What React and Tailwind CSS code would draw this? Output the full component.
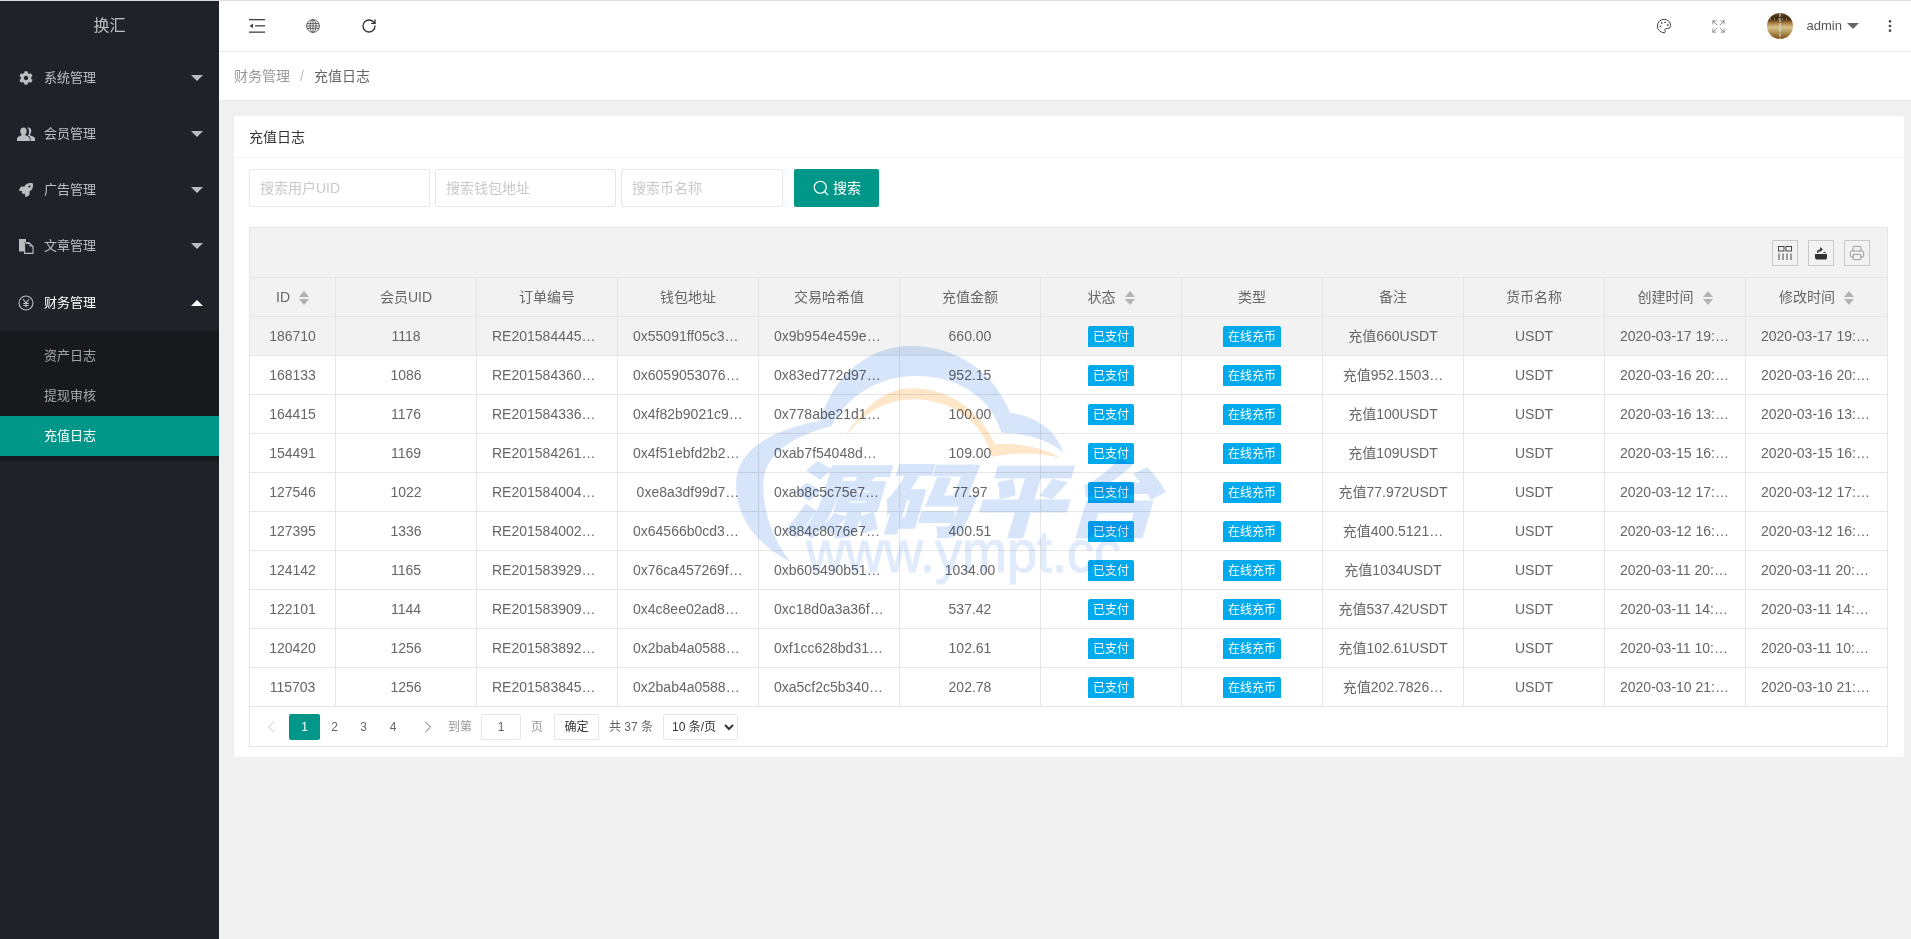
import React from 'react';
import { Palette, RotateCw, Expand, EllipsisVertical, Printer, Search, ChevronLeft, ChevronRight } from 'lucide-react';
import { FaCog, FaRocket } from 'react-icons/fa';

const RMB = () => (
  <svg width="16" height="16" viewBox="0 0 16 16" fill="none" stroke="currentColor" strokeWidth="1.1">
    <circle cx="8" cy="8" r="7" />
    <path d="M5 4 L8 8 L11 4 M8 8 V12.5 M5.2 8.5 H10.8 M5.2 10.5 H10.8" />
  </svg>
);

const Users = () => (
  <svg width="18" height="16" viewBox="0 0 18 16" fill="currentColor">
    <path d="M11.5 1.5 C13.3 1.5 14.3 3 14.3 5 C14.3 6.6 13.6 7.8 12.8 8.5 C13 9.3 14 9.7 15.5 10.3 C17 10.9 18 11.6 18 13 V15 H13.5 V12.8 C13.5 11.2 12.2 10.2 10.8 9.6 C11.8 8.5 12.2 6.8 12 5 C11.9 3.6 11.2 2.4 10.2 1.8 C10.6 1.6 11 1.5 11.5 1.5 Z" />
    <path d="M6.5 1.5 C8.6 1.5 9.7 3.1 9.7 5 C9.7 6.6 9 7.9 8.1 8.6 C8.3 9.4 9.4 9.8 10.6 10.3 C11.7 10.8 12.8 11.6 12.8 13 V15 H0 V13 C0 11.6 1.2 10.8 2.4 10.3 C3.6 9.8 4.7 9.4 4.9 8.6 C4 7.9 3.3 6.6 3.3 5 C3.3 3.1 4.4 1.5 6.5 1.5 Z" />
  </svg>
);

const Pages = () => (
  <svg width="16" height="16" viewBox="0 0 16 16">
    <path d="M1 1 H8 V4 H6 V13.5 H1 Z" fill="currentColor" />
    <path d="M6.6 5 H11.5 L15 8.5 V15.4 H6.6 Z" fill="none" stroke="currentColor" strokeWidth="1.1" />
    <path d="M7 4.5 H11.5 V8.5 H15" fill="currentColor" />
  </svg>
);

const menus = [
  { name: '系统管理', icon: <FaCog size={14} /> },
  { name: '会员管理', icon: <Users /> },
  { name: '广告管理', icon: <FaRocket size={14} /> },
  { name: '文章管理', icon: <Pages /> },
];

const rows = [
  ['186710', '1118', 'RE2015844456012', '0x55091ff05c3a7be19', '0x9b954e459e1c7da02', '660.00', '充值660USDT', '2020-03-17 19:32:10'],
  ['168133', '1086', 'RE2015843602154', '0x60590530761ab4e97', '0x83ed772d97fa1c340', '952.15', '充值952.1503…', '2020-03-16 20:14:52'],
  ['164415', '1176', 'RE2015843369481', '0x4f82b9021c9ea7703', '0x778abe21d1c0f4e92', '100.00', '充值100USDT', '2020-03-16 13:08:41'],
  ['154491', '1169', 'RE2015842617730', '0x4f51ebfd2b2a60c18', '0xab7f54048d93ce7a1', '109.00', '充值109USDT', '2020-03-15 16:47:03'],
  ['127546', '1022', 'RE2015840042216', '0xe8a3df99d7…', '0xab8c5c75e7d0ac316', '77.97', '充值77.972USDT', '2020-03-12 17:20:36'],
  ['127395', '1336', 'RE2015840029957', '0x64566b0cd34ae8f71', '0x884c8076e7b21f5d0', '400.51', '充值400.5121…', '2020-03-12 16:58:19'],
  ['124142', '1165', 'RE2015839294408', '0x76ca457269fd03be2', '0xb605490b51c8ea724', '1034.00', '充值1034USDT', '2020-03-11 20:25:47'],
  ['122101', '1144', 'RE2015839096673', '0x4c8ee02ad8317fb06', '0xc18d0a3a36f9be215', '537.42', '充值537.42USDT', '2020-03-11 14:39:28'],
  ['120420', '1256', 'RE2015838925180', '0x2bab4a05885fd1c37', '0xf1cc628bd31a07e64', '102.61', '充值102.61USDT', '2020-03-11 10:11:05'],
  ['115703', '1256', 'RE2015838453329', '0x2bab4a05885fd1c37', '0xa5cf2c5b3409dd1e8', '202.78', '充值202.7826…', '2020-03-10 21:02:54'],
];

const SortIcon = () => (
  <span className="ml-[9px] inline-flex flex-col gap-[2px] align-middle">
    <span className="h-0 w-0 border-x-[5px] border-b-[6px] border-x-transparent border-b-[#b2b2b2]" />
    <span className="h-0 w-0 border-x-[5px] border-t-[6px] border-x-transparent border-t-[#b2b2b2]" />
  </span>
);

const Th = ({ children, sort, last, width }) => (
  <th className={`h-[39px] border-b border-[#e6e6e6] px-0 text-center text-sm font-normal text-[#666] ${last ? '' : 'border-r'} ${width || ''}`}>
    {children}
    {sort && <SortIcon />}
  </th>
);

const Td = ({ children, last }) => (
  <td className={`h-[39px] border-b border-[#e6e6e6] p-0 text-center text-sm text-[#666] ${last ? '' : 'border-r'}`}>
    <div className="truncate px-[15px]">{children}</div>
  </td>
);

const Tag = ({ children }) => (
  <span className="relative top-[1px] inline-block h-[22px] rounded-[2px] bg-[#01AAED] px-[5px] text-xs leading-[22px] text-white">{children}</span>
);

const ToolBtn = ({ children }) => (
  <button className="flex h-[26px] w-[26px] items-center justify-center border border-[#c9c9c9] text-[#333]">{children}</button>
);

// cloud logo laid over the table
const Watermark = () => (
  <svg className="pointer-events-none absolute left-[720px] top-[330px] z-10 h-[280px] w-[500px] mix-blend-multiply" viewBox="0 0 1500 840">
    <g fill="#d6e5fa">
      <path d="M210 692 C110 640 48 560 48 460 C48 370 130 300 300 270 C340 130 450 45 570 45 C710 45 820 120 870 245 C950 255 1010 300 1030 365 C990 330 920 305 845 305 C810 195 710 135 590 135 C480 135 385 190 335 285 C200 320 130 380 130 460 C130 560 165 630 210 692 Z" />
      <text x="190" y="598" stroke="#d6e5fa" strokeWidth="4" fontFamily="'Noto Sans CJK SC', sans-serif" fontWeight="900" fontStyle="italic" fontSize="240" textLength="1125" lengthAdjust="spacingAndGlyphs">源码平台</text>
    </g>
    <path fill="#fde7c8" d="M375 318 C430 225 500 172 575 172 C690 172 780 240 825 340 C900 335 970 350 1020 380 C960 365 890 362 815 378 C790 270 690 205 580 205 C490 205 430 250 375 318 Z" />
    <text x="258" y="722" fill="#e0ebfb" stroke="#e0ebfb" strokeWidth="3" fontFamily="'Liberation Sans', sans-serif" fontSize="175" textLength="945" lengthAdjust="spacingAndGlyphs">www.ympt.cc</text>
  </svg>
);

const App = () => {
  return (
    <div className="relative flex h-screen flex-col overflow-hidden border-t border-[#ddd] bg-[#f0f0f0] font-['Liberation_Sans','Noto_Sans_CJK_SC',sans-serif]">
      <Watermark />
      <div className="flex min-h-0 flex-1">
        {/* sidebar */}
        <aside className="w-[219px] shrink-0 bg-[#20222A]">
          <div className="flex h-[49px] items-center justify-center text-base text-white/70">换汇</div>
          {menus.map(m => (
            <div key={m.name} className="relative flex h-[56px] items-center pl-[44px] pr-[16px] text-[13px] text-white/70">
              <span className="absolute left-[17px] flex w-[18px] justify-center">{m.icon}</span>
              <span className="flex-1">{m.name}</span>
              <span className="h-0 w-0 border-x-[6px] border-t-[6px] border-x-transparent border-t-white/70" />
            </div>
          ))}
          <div className="relative flex h-[57px] items-center pl-[44px] pr-[16px] text-[13px] text-white">
            <span className="absolute left-[17px] flex w-[18px] justify-center text-white/70"><RMB /></span>
            <span className="flex-1">财务管理</span>
            <span className="h-0 w-0 border-x-[6px] border-b-[6px] border-x-transparent border-b-white" />
          </div>
          <div className="bg-[#18191d] py-[5px] text-[13px]">
            <div className="flex h-[40px] items-center pl-[44px] text-white/60">资产日志</div>
            <div className="flex h-[40px] items-center pl-[44px] text-white/60">提现审核</div>
            <div className="flex h-[40px] items-center bg-[#009688] pl-[44px] text-white">充值日志</div>
          </div>
        </aside>

        <main className="flex min-w-0 flex-1 flex-col">
          {/* top bar */}
          <header className="flex h-[51px] shrink-0 items-center border-b border-[#e8e8e8] bg-white pl-[30px] pr-[13px] text-[#444]">
            <svg width="16" height="14" viewBox="0 0 16 14" fill="currentColor">
              <rect x="0" y="0" width="16" height="1.3" />
              <rect x="0" y="12.5" width="16" height="1.3" />
              <rect x="6" y="6.2" width="10" height="1.3" />
              <path d="M0.5 6.9 L4 4.6 V9.2 Z" />
            </svg>
            <svg className="ml-[41px]" width="14" height="14" viewBox="0 0 14 14" fill="none" stroke="#555" strokeWidth="0.9">
              <circle cx="7" cy="7" r="6.4" />
              <ellipse cx="7" cy="7" rx="3" ry="6.4" />
              <path d="M7 .6 V13.4 M1 4.6 H13 M.6 7 H13.4 M1 9.4 H13" />
            </svg>
            <RotateCw className="ml-[41px]" size={16} strokeWidth={2} color="#333" />
            <div className="ml-auto flex items-center">
              <Palette size={16} strokeWidth={1.5} color="#444" />
              <Expand className="ml-[39px]" size={15} strokeWidth={1.3} color="#777" />
              <svg className="ml-[41px]" width="26" height="26" viewBox="0 0 26 26">
                <defs>
                  <linearGradient id="av" x1="0" y1="0" x2="0" y2="1">
                    <stop offset="0" stopColor="#6a4a24" />
                    <stop offset="0.22" stopColor="#3c2208" />
                    <stop offset="0.38" stopColor="#a67a3c" />
                    <stop offset="0.55" stopColor="#d8c48e" />
                    <stop offset="0.75" stopColor="#b29452" />
                    <stop offset="1" stopColor="#7a4c12" />
                  </linearGradient>
                </defs>
                <circle cx="13" cy="13" r="13" fill="url(#av)" />
                <path d="M13 0 V26" stroke="#cfe2ea" strokeWidth="1" strokeDasharray="4 1" />
                <path d="M3 6 H23" stroke="#fff" strokeWidth="0.8" strokeDasharray="1 3" />
              </svg>
              <span className="ml-[14px] text-[13px] text-[#555]">admin</span>
              <span className="ml-[5px] h-0 w-0 border-x-[6px] border-t-[6px] border-x-transparent border-t-[#666]" />
              <EllipsisVertical className="ml-[23px]" size={16} strokeWidth={2} color="#444" />
            </div>
          </header>

          {/* breadcrumb */}
          <div className="flex h-[49px] shrink-0 items-center border-b border-[#eaeaea] bg-white pl-[15px] text-sm">
            <span className="text-[#999]">财务管理</span>
            <span className="mx-[10px] text-[#bbb]">/</span>
            <span className="text-[#666]">充值日志</span>
          </div>

          <div className="px-[15px] pr-[7px] pt-[15px]">
            <div className="rounded-[2px] bg-white">
              <div className="flex h-[42px] items-center border-b border-[#f6f6f6] px-[15px] text-sm text-[#333]">充值日志</div>
              <div className="px-[15px] pb-[10px] pt-[11px]">
                <div className="flex items-center">
                  <input placeholder="搜索用户UID" className="h-[38px] w-[181px] rounded-[2px] border border-[#e6e6e6] px-[10px] text-sm outline-none placeholder:text-[#c9c9c9]" />
                  <input placeholder="搜索钱包地址" className="ml-[5px] h-[38px] w-[181px] rounded-[2px] border border-[#e6e6e6] px-[10px] text-sm outline-none placeholder:text-[#c9c9c9]" />
                  <input placeholder="搜索币名称" className="ml-[5px] h-[38px] w-[162px] rounded-[2px] border border-[#e6e6e6] px-[10px] text-sm outline-none placeholder:text-[#c9c9c9]" />
                  <button className="ml-[11px] flex h-[38px] w-[85px] items-center justify-center gap-[3px] rounded-[2px] bg-[#009688] text-sm text-white">
                    <Search size={18} strokeWidth={1.6} />
                    搜索
                  </button>
                </div>

                <div className="mt-[20px] w-[1639px] border border-[#e6e6e6]">
                  <div className="flex h-[50px] items-center justify-end gap-[10px] border-b border-[#e6e6e6] bg-[#f2f2f2] pr-[17px]">
                    <ToolBtn>
                      <svg width="14" height="14" viewBox="0 0 14 14" fill="none" stroke="#444" strokeWidth="1">
                        <rect x="0.5" y="0.5" width="5.5" height="4.5" />
                        <rect x="8" y="0.5" width="5.5" height="4.5" />
                        <path d="M1 7.5 V14 M5 7.5 V14 M9 7.5 V14 M13 7.5 V14" />
                      </svg>
                    </ToolBtn>
                    <ToolBtn>
                      <svg width="14" height="14" viewBox="0 0 14 14" fill="#333">
                        <path d="M1 8 H13 V12 L12 13.5 H2 L1 12 Z" />
                        <path d="M3 7 V6 C3 4.5 4.5 3.5 6 3.5 V1 L9 3.4 L6 5.8 V5.2 C5 5.2 4.3 6 4.3 7 Z M9.5 6 H11.5 V7 H9.5 Z" />
                      </svg>
                    </ToolBtn>
                    <ToolBtn><Printer size={16} strokeWidth={1.5} color="#999" /></ToolBtn>
                  </div>
                  <table className="w-full table-fixed border-separate border-spacing-0">
                    <thead className="bg-[#f2f2f2]">
                      <tr>
                        <Th sort width="w-[86px]">ID</Th>
                        <Th>会员UID</Th>
                        <Th>订单编号</Th>
                        <Th>钱包地址</Th>
                        <Th>交易哈希值</Th>
                        <Th>充值金额</Th>
                        <Th sort>状态</Th>
                        <Th>类型</Th>
                        <Th>备注</Th>
                        <Th>货币名称</Th>
                        <Th sort>创建时间</Th>
                        <Th sort last>修改时间</Th>
                      </tr>
                    </thead>
                    <tbody>
                      {rows.map((r, i) => (
                        <tr key={r[0]} className={i === 0 ? 'bg-[#f2f2f2]' : 'bg-white'}>
                          <Td>{r[0]}</Td>
                          <Td>{r[1]}</Td>
                          <Td>{r[2]}</Td>
                          <Td>{r[3]}</Td>
                          <Td>{r[4]}</Td>
                          <Td>{r[5]}</Td>
                          <Td><Tag>已支付</Tag></Td>
                          <Td><Tag>在线充币</Tag></Td>
                          <Td>{r[6]}</Td>
                          <Td>USDT</Td>
                          <Td>{r[7]}</Td>
                          <Td last>{r[7]}</Td>
                        </tr>
                      ))}
                    </tbody>
                  </table>
                  <div className="flex h-[39px] items-center pl-[6px] text-xs text-[#666]">
                    <ChevronLeft size={20} strokeWidth={1} color="#bbb" className="mx-[5px]" />
                    <span className="ml-[3px] flex h-[26px] w-[31px] items-center justify-center rounded-[2px] bg-[#009688] text-white">1</span>
                    <span className="w-[29px] text-center">2</span>
                    <span className="w-[29px] text-center">3</span>
                    <span className="w-[30px] text-center">4</span>
                    <ChevronRight size={20} strokeWidth={1} color="#555" className="ml-[10px]" />
                    <span className="ml-[10px] text-[#999]">到第</span>
                    <input defaultValue="1" className="ml-[9px] h-[26px] w-[40px] rounded-[2px] border border-[#e6e6e6] text-center text-xs outline-none" />
                    <span className="ml-[10px] text-[#999]">页</span>
                    <button className="ml-[11px] h-[26px] w-[45px] rounded-[2px] border border-[#e6e6e6] text-xs text-[#333]">确定</button>
                    <span className="ml-[10px]">共 37 条</span>
                    <select defaultValue="10" className="ml-[10px] h-[26px] w-[75px] rounded-[2px] border border-[#e6e6e6] bg-white pl-[4px] text-xs text-[#333] outline-none">
                      <option value="10">10 条/页</option>
                    </select>
                  </div>
                </div>
              </div>
            </div>
          </div>
        </main>
      </div>
    </div>
  );
};

export default App;
